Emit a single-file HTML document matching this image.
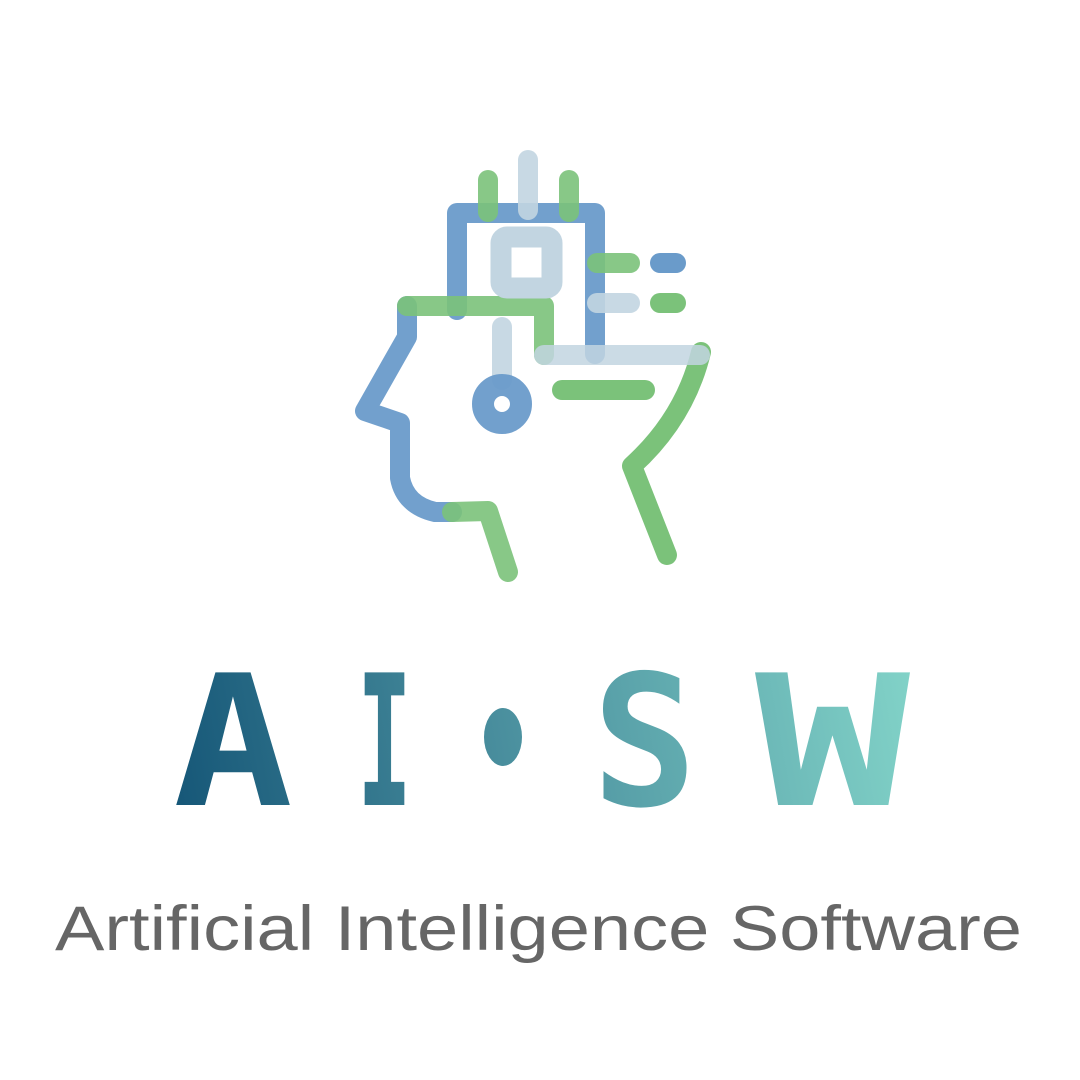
<!DOCTYPE html>
<html><head><meta charset="utf-8"><style>
html,body{margin:0;padding:0;background:#fff;width:1080px;height:1080px;overflow:hidden}
svg{display:block}
</style></head><body>
<svg width="1080" height="1080" viewBox="0 0 1080 1080" xmlns="http://www.w3.org/2000/svg">
<defs>
<linearGradient id="g" x1="170" y1="805" x2="915" y2="670" gradientUnits="userSpaceOnUse">
<stop offset="0" stop-color="#155677"/>
<stop offset="0.45" stop-color="#4a8f9e"/>
<stop offset="1" stop-color="#82d3c8"/>
</linearGradient>
</defs>
<g fill="none" stroke-linecap="round" stroke-linejoin="round" stroke-width="20">
<!-- blue chip outline -->
<path d="M457 310 V213 H595 V354" stroke="#6a9bca" opacity="0.95"/>
<!-- head outline blue -->
<path d="M407 306 V337 L365 411 L400 423 V478 Q405 505 435 512 H452" stroke="#6a9bca" opacity="0.95"/>
<!-- green path -->
<path d="M407 306 H544 V355" stroke="#7bc27a" opacity="0.9"/>
<!-- green pins -->
<path d="M488 180 V212 M569 180 V212" stroke="#7bc27a" opacity="0.9"/>
<!-- light pin -->
<path d="M528 160 V210" stroke="#c2d5e1" opacity="0.9"/>
<!-- light square -->
<rect x="501" y="237" width="51" height="51" rx="6" stroke="#c2d5e1" stroke-width="21" stroke-linejoin="round"/>
<!-- right lines -->
<path d="M597 263 H630" stroke="#7bc27a" opacity="0.9"/>
<path d="M660 263 H676" stroke="#6a9bca"/>
<path d="M597 303 H630" stroke="#c2d5e1" opacity="0.9"/>
<path d="M660 303 H676" stroke="#7bc27a"/>
<!-- green chin -->
<path d="M452 512 L488 511 L508 572" stroke="#7bc27a" opacity="0.9"/>
<!-- green back of head -->
<path d="M701 352 Q685 418 632 466 L667 555" stroke="#7bc27a"/>
<!-- light horizontal -->
<path d="M544 355 H700" stroke="#c2d5e1" opacity="0.85"/>
<!-- light vertical -->
<path d="M502 327 V380" stroke="#c2d5e1" opacity="0.9"/>
<!-- circle -->
<circle cx="502" cy="404" r="19" stroke="#6a9bca" stroke-width="22" opacity="0.95"/>
<!-- green line -->
<path d="M562 390 H645" stroke="#7bc27a"/>
</g>
<g fill="url(#g)" font-family="'DejaVu Sans Mono', 'Liberation Mono', monospace" font-weight="bold">
<text x="173" y="805" font-size="182" textLength="120" lengthAdjust="spacingAndGlyphs">A</text>
<text x="357" y="805" font-size="182" textLength="55" lengthAdjust="spacingAndGlyphs">I</text>
<ellipse cx="503" cy="737" rx="19" ry="29"/>
<text x="592" y="805" font-size="182" textLength="105" lengthAdjust="spacingAndGlyphs">S</text>
<text x="755" y="805" font-size="182" textLength="155" lengthAdjust="spacingAndGlyphs">W</text>
</g>
<text x="55" y="950" font-family="'Liberation Sans', sans-serif" font-size="63" fill="#666" textLength="967" lengthAdjust="spacingAndGlyphs">Artificial Intelligence Software</text>
</svg>
</body></html>
